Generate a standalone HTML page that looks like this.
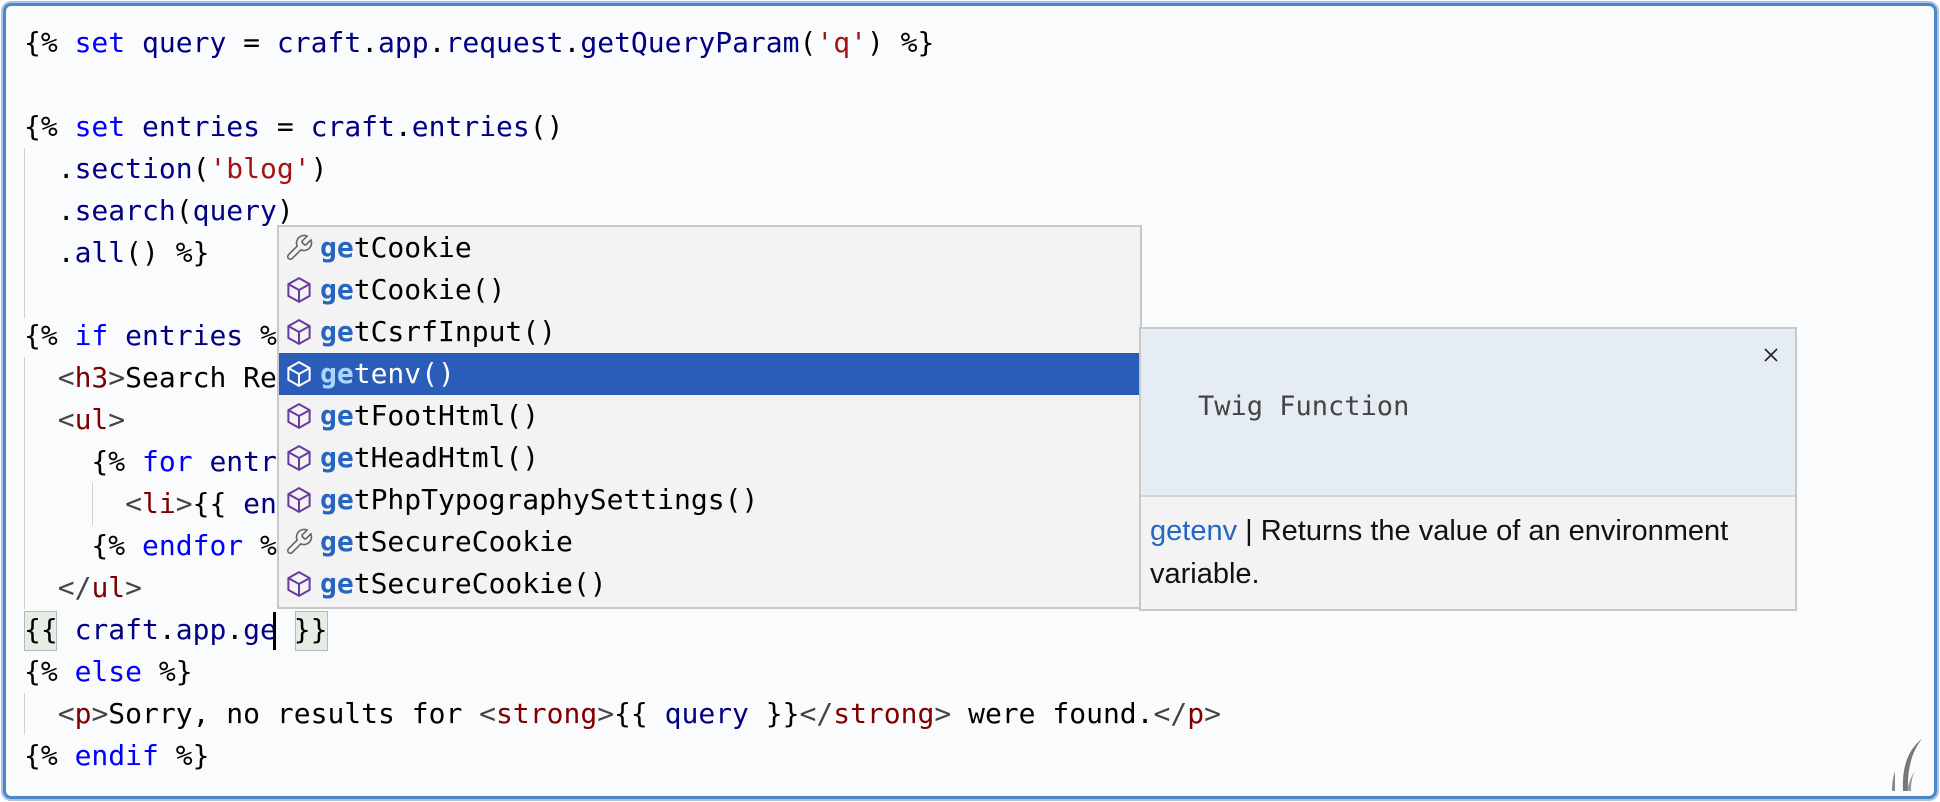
<!DOCTYPE html>
<html><head><meta charset="utf-8"><style>
*{margin:0;padding:0;box-sizing:border-box}
html,body{width:1940px;height:802px;overflow:hidden;background:#fff}
#frame{position:absolute;left:1px;top:1px;width:1938px;height:800px;border:2px solid #a9c6e6;border-radius:10px}
#ed{position:absolute;left:3px;top:3px;width:1934px;height:796px;border:3px solid #4a86c8;border-radius:8px;background:#fafbfd;overflow:hidden}
.l{position:absolute;left:18px;height:42px;line-height:42px;font-family:"DejaVu Sans Mono","Liberation Mono",monospace;font-size:28px;white-space:pre;color:#000}
.k{color:#0000ff}.v{color:#000080}.s{color:#a31515}.t{color:#800000}.b{color:#444}
.g{position:absolute;width:1px;background:#d0d0d0}
.bm{position:absolute;background:#e6ede4;border:1.5px solid #b8b8b8}
#dd{position:absolute;left:271px;top:219px;width:865px;height:384px;background:#f3f3f3;border:2px solid #c8c8c8}
.r{position:absolute;left:0;width:861px;height:42px;line-height:42px;font-family:"DejaVu Sans Mono",monospace;font-size:28px;white-space:pre;color:#000}
.r .ic{position:absolute;left:5px;top:6px;width:30px;height:30px}
.r .tx{position:absolute;left:41px;top:0}
.r b{color:#2766c0}
.r.sel{background:#2a5db9;color:#fff}
.r.sel b{color:#a8d6ff}
#tt{position:absolute;left:1133px;top:321px;width:658px;height:284px;background:#f3f3f3;border:2px solid #c8c8c8}
#th{position:absolute;left:0;top:0;width:654px;height:168px;background:#e6ecf4;border-bottom:2px solid #cfd4da}
</style></head><body>
<div id="frame"></div>
<div id="ed">
<div class="g" style="left:18px;top:142px;height:170px"></div>
<div class="g" style="left:18px;top:351px;height:252px"></div>
<div class="g" style="left:86px;top:477px;height:42px"></div>
<div class="g" style="left:18px;top:687px;height:42px"></div>
<div class="bm" style="left:18px;top:605px;width:33px;height:40px"></div>
<div class="bm" style="left:289px;top:605px;width:33px;height:40px"></div>
<div class="l" style="top:16px">{% <span class="k">set</span> <span class="v">query</span> = <span class="v">craft</span>.<span class="v">app</span>.<span class="v">request</span>.<span class="v">getQueryParam</span>(<span class="s">'q'</span>) %}</div>
<div class="l" style="top:100px">{% <span class="k">set</span> <span class="v">entries</span> = <span class="v">craft</span>.<span class="v">entries</span>()</div>
<div class="l" style="top:142px">  .<span class="v">section</span>(<span class="s">'blog'</span>)</div>
<div class="l" style="top:184px">  .<span class="v">search</span>(<span class="v">query</span>)</div>
<div class="l" style="top:226px">  .<span class="v">all</span>() %}</div>
<div class="l" style="top:309px">{% <span class="k">if</span> <span class="v">entries</span> %}</div>
<div class="l" style="top:351px">  <span class="b">&lt;</span><span class="t">h3</span><span class="b">&gt;</span>Search Results</div>
<div class="l" style="top:393px">  <span class="b">&lt;</span><span class="t">ul</span><span class="b">&gt;</span></div>
<div class="l" style="top:435px">    {% <span class="k">for</span> <span class="v">entry</span></div>
<div class="l" style="top:477px">      <span class="b">&lt;</span><span class="t">li</span><span class="b">&gt;</span>{{ <span class="v">entry</span></div>
<div class="l" style="top:519px">    {% <span class="k">endfor</span> %}</div>
<div class="l" style="top:561px">  <span class="b">&lt;/</span><span class="t">ul</span><span class="b">&gt;</span></div>
<div class="l" style="top:603px">{{ <span class="v">craft</span>.<span class="v">app</span>.<span class="v">ge</span> }}</div>
<div style="position:absolute;left:267px;top:606px;width:3px;height:38px;background:#000"></div>
<div class="l" style="top:645px">{% <span class="k">else</span> %}</div>
<div class="l" style="top:687px">  <span class="b">&lt;</span><span class="t">p</span><span class="b">&gt;</span>Sorry, no results for <span class="b">&lt;</span><span class="t">strong</span><span class="b">&gt;</span>{{ <span class="v">query</span> }}<span class="b">&lt;/</span><span class="t">strong</span><span class="b">&gt;</span> were found.<span class="b">&lt;/</span><span class="t">p</span><span class="b">&gt;</span></div>
<div class="l" style="top:729px">{% <span class="k">endif</span> %}</div>

<div id="dd">
<div class="r" style="top:0"><svg class="ic" viewBox="0 0 24 24" fill="none" stroke="#666" stroke-width="1.3"><path d="M14.7 6.3a1 1 0 0 0 0 1.4l1.6 1.6a1 1 0 0 0 1.4 0l3.77-3.77a6 6 0 0 1-7.94 7.94l-6.91 6.91a2.12 2.12 0 0 1-3-3l6.91-6.91a6 6 0 0 1 7.94-7.94l-3.76 3.76z"/></svg><span class="tx"><b>ge</b>tCookie</span></div>
<div class="r" style="top:42px"><svg class="ic" viewBox="0 0 24 24" fill="none" stroke="#6b3aa0" stroke-width="1.6"><path d="M12 2.5l8.5 4.8v9.4L12 21.5l-8.5-4.8V7.3z M3.5 7.3L12 12l8.5-4.7 M12 12v9.5"/></svg><span class="tx"><b>ge</b>tCookie()</span></div>
<div class="r" style="top:84px"><svg class="ic" viewBox="0 0 24 24" fill="none" stroke="#6b3aa0" stroke-width="1.6"><path d="M12 2.5l8.5 4.8v9.4L12 21.5l-8.5-4.8V7.3z M3.5 7.3L12 12l8.5-4.7 M12 12v9.5"/></svg><span class="tx"><b>ge</b>tCsrfInput()</span></div>
<div class="r sel" style="top:126px"><svg class="ic" viewBox="0 0 24 24" fill="none" stroke="#fff" stroke-width="1.6"><path d="M12 2.5l8.5 4.8v9.4L12 21.5l-8.5-4.8V7.3z M3.5 7.3L12 12l8.5-4.7 M12 12v9.5"/></svg><span class="tx"><b>ge</b>tenv()</span></div>
<div class="r" style="top:168px"><svg class="ic" viewBox="0 0 24 24" fill="none" stroke="#6b3aa0" stroke-width="1.6"><path d="M12 2.5l8.5 4.8v9.4L12 21.5l-8.5-4.8V7.3z M3.5 7.3L12 12l8.5-4.7 M12 12v9.5"/></svg><span class="tx"><b>ge</b>tFootHtml()</span></div>
<div class="r" style="top:210px"><svg class="ic" viewBox="0 0 24 24" fill="none" stroke="#6b3aa0" stroke-width="1.6"><path d="M12 2.5l8.5 4.8v9.4L12 21.5l-8.5-4.8V7.3z M3.5 7.3L12 12l8.5-4.7 M12 12v9.5"/></svg><span class="tx"><b>ge</b>tHeadHtml()</span></div>
<div class="r" style="top:252px"><svg class="ic" viewBox="0 0 24 24" fill="none" stroke="#6b3aa0" stroke-width="1.6"><path d="M12 2.5l8.5 4.8v9.4L12 21.5l-8.5-4.8V7.3z M3.5 7.3L12 12l8.5-4.7 M12 12v9.5"/></svg><span class="tx"><b>ge</b>tPhpTypographySettings()</span></div>
<div class="r" style="top:294px"><svg class="ic" viewBox="0 0 24 24" fill="none" stroke="#666" stroke-width="1.3"><path d="M14.7 6.3a1 1 0 0 0 0 1.4l1.6 1.6a1 1 0 0 0 1.4 0l3.77-3.77a6 6 0 0 1-7.94 7.94l-6.91 6.91a2.12 2.12 0 0 1-3-3l6.91-6.91a6 6 0 0 1 7.94-7.94l-3.76 3.76z"/></svg><span class="tx"><b>ge</b>tSecureCookie</span></div>
<div class="r" style="top:336px"><svg class="ic" viewBox="0 0 24 24" fill="none" stroke="#6b3aa0" stroke-width="1.6"><path d="M12 2.5l8.5 4.8v9.4L12 21.5l-8.5-4.8V7.3z M3.5 7.3L12 12l8.5-4.7 M12 12v9.5"/></svg><span class="tx"><b>ge</b>tSecureCookie()</span></div>
</div>

<div id="tt">
<div id="th">
<div style="position:absolute;left:57px;top:60px;font-family:'DejaVu Sans Mono',monospace;font-size:27px;color:#444;line-height:36px">Twig Function</div>
<svg style="position:absolute;left:623px;top:19px" width="14" height="14" viewBox="0 0 14 14" stroke="#222" stroke-width="1.6"><path d="M1 1L13 13M13 1L1 13"/></svg>
</div>
<div style="position:absolute;left:9px;top:181px;width:600px;font-family:'Liberation Sans',sans-serif;font-size:29px;line-height:43px;color:#111"><span style="color:#2766c0">getenv</span> | Returns the value of an environment variable.</div>
</div>

<svg style="position:absolute;left:1876px;top:725px" width="40" height="62" viewBox="0 0 40 62">
<path d="M21 60 C20 40 24 20 40 8 C30 20 25 38 26 60 Z" fill="#777"/>
<path d="M25 60 C27 50 30 44 33 40 C30 46 29 52 29 60Z" fill="#999"/>
<path d="M10 60 C10 52 11 46 13 40 C13 48 13 54 13 60Z" fill="#888"/>
</svg>
</div>
</body></html>
